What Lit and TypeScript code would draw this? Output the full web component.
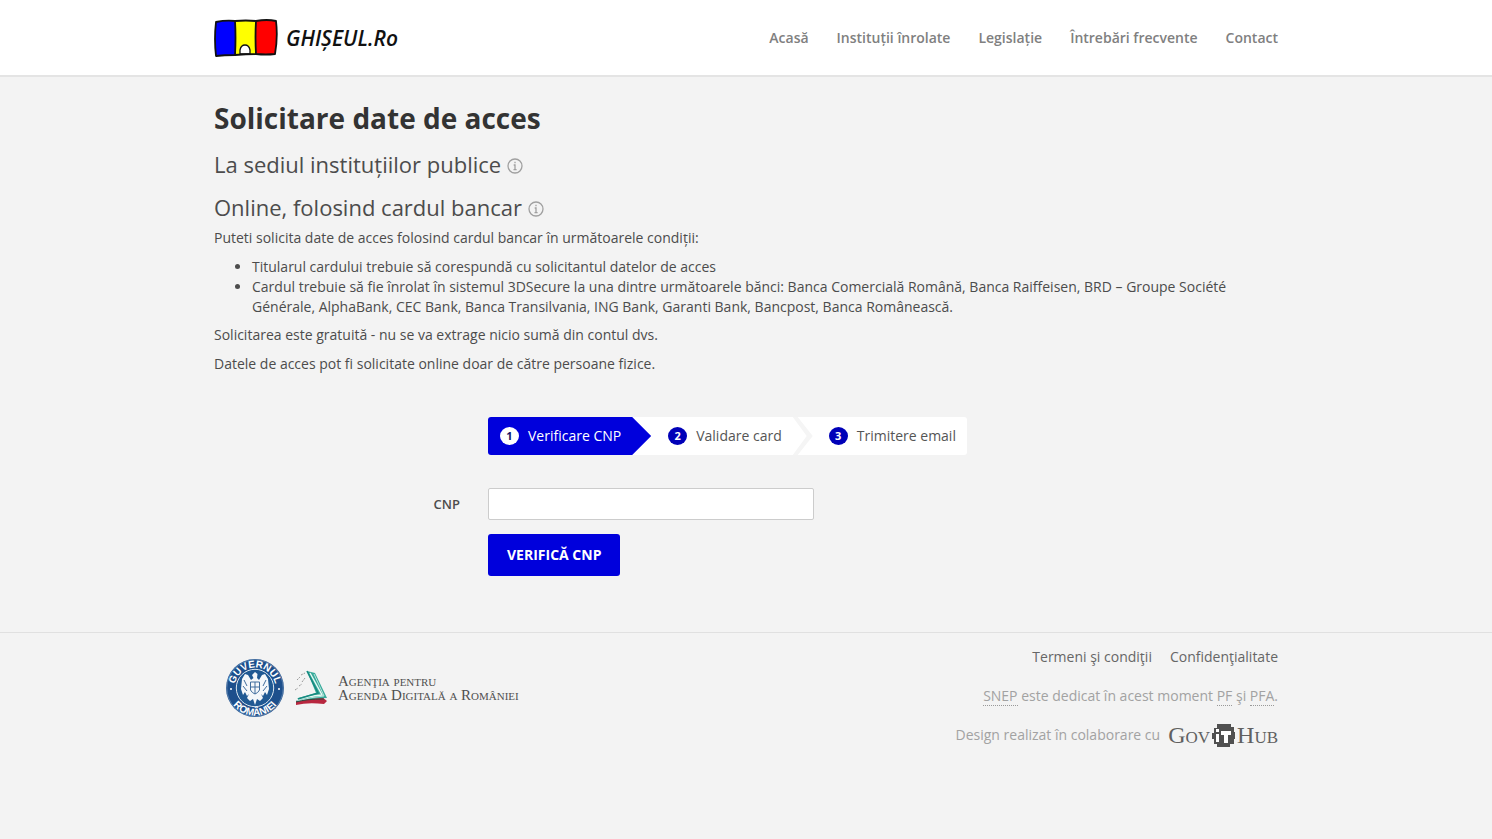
import { LitElement, html, css } from "lit";
import { customElement, property, state } from "lit/decorators.js";
import { classMap } from "lit/directives/class-map.js";

@customElement("site-logo")
class SiteLogo extends LitElement {
  static styles = css`
    :host { display: block; }
    .logo { display: flex; align-items: center; gap: 8px; color: #111; text-decoration: none; }
    .flag { display: block; width: 64px; height: 38px; }
    .name { font: italic 600 21px/38px "Open Sans", sans-serif; }
  `;
  render() {
    return html`
      <a class="logo" href="#">
        <svg class="flag" viewBox="0 0 64 38" aria-hidden="true">
          <path d="M2 3 Q12 1 21 2 L21 36 Q10 36 2 37 Q0 20 2 3Z" fill="#00f" />
          <path d="M21 2 Q32 1 42 2 L42 35 Q32 35 21 36Z" fill="#ff0" />
          <path d="M42 2 Q53 0 62 2 Q64 18 61 35 Q52 36 42 35Z" fill="#f00" />
          <path d="M26 35 V31 Q27 26 31 26 Q35 26 36 31 V35Z" fill="#fff" stroke="#111" stroke-width="1.3" />
          <path d="M2 3 Q12 1 21 2 Q32 1 42 2 Q53 0 62 2 Q64 18 61 35 Q52 36 42 35 Q32 35 21 36 Q10 36 2 37 Q0 20 2 3Z M21 2 Q22 18 21 36 M42 2 Q41 18 42 35"
            fill="none" stroke="#111" stroke-width="1.8" stroke-linejoin="round" />
        </svg>
        <span class="name">GHIȘEUL.Ro</span>
      </a>
    `;
  }
}

@customElement("step-list")
class StepList extends LitElement {
  @property({ attribute: false }) steps: string[] = [];
  @property({ type: Number }) current = 0;

  static styles = css`
    :host { display: block; }
    .steps { display: inline-flex; vertical-align: top; margin: 0; padding: 0; list-style: none; background: #fff; border-radius: 3px; overflow: hidden; }
    .step { position: relative; display: flex; align-items: center; gap: 9px; height: 38px; padding: 0 11px; color: #555; }
    .step + .step { padding-left: 36px; }
    .step:not(:last-child)::after {
      content: ""; position: absolute; z-index: 1; top: 0; left: 100%; width: 20px; height: 100%;
      background: #f5f5f5;
      clip-path: polygon(0 0, 5px 0, 100% 50%, 5px 100%, 0 100%, calc(100% - 6px) 50%);
    }
    .active { background: #0000dc; color: #fff; }
    .active:first-child { padding-left: 12px; }
    .step.active:not(:last-child)::after { left: calc(100% - 1px); background: #0000dc; clip-path: polygon(0 0, 1px 0, 100% 50%, 1px 100%, 0 100%); }
    .number {
      width: 19px; height: 18px; border-radius: 50%; background: #0000b8; color: #fff;
      font-size: 11px; font-weight: 700; line-height: 18px; text-align: center;
    }
    .active .number { background: #fff; color: #111166; }
  `;
  render() {
    return html`
      <ol class="steps">
        ${this.steps.map(
          (label, i) => html`
            <li class=${classMap({ step: true, active: i === this.current })}>
              <span class="number">${i + 1}</span><span>${label}</span>
            </li>
          `,
        )}
      </ol>
    `;
  }
}

@customElement("site-footer")
class SiteFooter extends LitElement {
  static styles = css`
    :host { display: block; border-top: 1px solid #e0e0e0; }
    .inner { display: flex; justify-content: space-between; gap: 24px; max-width: 1064px; margin: 0 auto; padding: 14px 0 24px; }
    .agency { display: flex; align-items: flex-start; gap: 10px; padding: 12px 0 0 12px; }
    .seal { display: block; width: 58px; height: 58px; overflow: visible; }
    .ring { font: 700 10px "Liberation Sans", sans-serif; fill: #fff; }
    .books { display: block; width: 34px; height: 36px; margin-top: 11px; }
    .title { margin: 15px 0 0; font: 15px/14px "Liberation Serif", serif; font-variant: small-caps; color: #505050; }
    .info { display: flex; flex-direction: column; align-items: flex-end; gap: 19px; line-height: 20px; color: #a2a2a2; }
    .links { display: flex; gap: 18px; }
    .links a { color: #666; text-decoration: none; }
    .info p { margin: 0; }
    abbr { text-decoration: none; border-bottom: 1px dotted #999; }
    .design { display: flex; align-items: center; gap: 8px; height: 20px; }
    .hub { display: flex; align-items: center; gap: 2px; color: #606060; font: 24px/20px "Liberation Serif", serif; font-variant: small-caps; text-decoration: none; }
    .hub svg { display: block; width: 23px; height: 23px; }
  `;
  render() {
    return html`
      <div class="inner">
        <div class="agency">
          <svg class="seal" viewBox="0 0 58 58" role="img" aria-label="Guvernul României">
            <defs>
              <path id="top" d="M8.500 29 A20.500 20.500 0 0 1 49.500 29" />
              <path id="bottom" d="M1.500 29 A27.500 27.500 0 0 0 56.500 29" />
            </defs>
            <circle cx="29" cy="29" r="29" fill="#1d4f8c" />
            <circle cx="29" cy="29" r="28.200" fill="none" stroke="#8fabc9" stroke-width=".5" />
            <circle cx="29" cy="29" r="18.700" fill="#205993" stroke="#dce7f0" stroke-width="1" />
            <text class="ring" text-anchor="middle"><textPath href="#top" startOffset="50%">GUVERNUL</textPath></text>
            <text class="ring" text-anchor="middle"><textPath href="#bottom" startOffset="50%">ROMÂNIEI</textPath></text>
            <circle cx="5" cy="30" r="1" fill="#fff" /><circle cx="53" cy="30" r="1" fill="#fff" />
            <path d="M29 13 L31.5 15 L31 19 L33 21 L36 16 L39 15 L42 20 L43 30 L41 36 L39 33 L37 37 L35 35 L37 39 L34 42 L31 40 L29 46 L27 40 L24 42 L21 39 L23 35 L21 37 L19 33 L17 36 L15 30 L16 20 L19 15 L22 16 L25 21 L27.5 19 L26 16 Z" fill="#f4f7fa" />
            <path d="M24.5 23 H33.5 V31 Q32 34 29 35 Q26 34 24.5 31Z M29 23 V35 M24.5 28 H33.5 M18 21 L21 27 M17 27 L21 32 M40 21 L37 27 M41 27 L37 32" fill="none" stroke="#406d9d" stroke-width="1" />
          </svg>
          <svg class="books" viewBox="0 0 34 36" aria-hidden="true">
            <path d="M2 31 Q8 28 28 27 L33 31 L30 34 Q14 32 2 35Z" fill="#b8273f" />
            <path d="M13 1 L21 3 L33 28 Q18 28 2 32 L4 28 L22 23Z" fill="#38aa9b" />
            <path d="M16 3 L28 25 Q14 26 3 30" fill="none" stroke="#e9f8f4" stroke-width="1.4" />
            <path d="M20 4 L30 26 Q16 27 4 31" fill="none" stroke="#b8e6dc" stroke-width="1" />
            <path d="M13 1 L24 23 L4 29" fill="none" stroke="#168a80" stroke-width="1.6" />
            <path d="M2 32 Q12 29 30 29" fill="none" stroke="#35463f" stroke-width="1" />
            <path d="M1 20 L4 18 M5 16 L8 14 M8 12 L11 8 M3 10 L6 7 M7 5 L11 3" stroke="#999" stroke-width="1" stroke-dasharray="2 1" />
          </svg>
          <p class="title">Agenţia pentru<br />Agenda Digitală a României</p>
        </div>
        <div class="info">
          <nav class="links" aria-label="Informații legale">
            <a href="#">Termeni şi condiţii</a>
            <a href="#">Confidenţialitate</a>
          </nav>
          <p><abbr>SNEP</abbr> este dedicat în acest moment <abbr>PF</abbr> şi <abbr>PFA</abbr>.</p>
          <p class="design">
            <span>Design realizat în colaborare cu</span>
            <a class="hub" href="#">
              <span>Gov</span>
              <svg viewBox="0 0 23 23" role="img" aria-label="IT">
                <path d="M5 0 H19 V3 H22 V8 H23 V15 H22 V20 H18 V23 H5 V20 H2 V15 H0 V9 H2 V4 H5Z" fill="#505050" />
                <path d="M4 5 H7 V8 H4Z M4 10 H7 V18 H4Z M9 7 H19 V11 H16 V19 H12 V11 H9Z" fill="#fff" />
              </svg>
              <span>Hub</span>
            </a>
          </p>
        </div>
      </div>
    `;
  }
}

@customElement("app-root")
class AppRoot extends LitElement {
  @state() private cnp = "";

  static styles = css`
    :host { display: block; min-height: 100vh; background: #f3f3f3; color: #4c4c4c; font: 14px/20px "Open Sans", sans-serif; }
    .header { background: #fff; border-bottom: 2px solid #e4e4e4; }
    .bar { display: flex; align-items: center; justify-content: space-between; gap: 24px; max-width: 1064px; padding: 19px 0 18px; margin: 0 auto; }
    .menu { display: flex; gap: 28px; }
    .menu a { color: #808080; font-weight: 600; text-decoration: none; }
    .content { max-width: 1064px; margin: 0 auto; padding: 22px 0 56px; }
    h1 { margin: 0; color: #333; font-size: 28px; line-height: 38px; }
    h2 { display: flex; align-items: center; gap: 6px; margin: 11px 0 0; font-size: 22px; font-weight: 400; line-height: 32px; }
    .tip { display: block; padding: 3px 0 0; border: 0; background: none; }
    .tip svg { display: block; width: 16px; height: 16px; }
    p { margin: 0 0 9px; }
    .intro { margin-top: 5px; }
    .terms { margin: 0 0 8px; padding-left: 38px; }
    .form { display: grid; grid-template-columns: 246px 1fr; column-gap: 28px; margin-top: 43px; align-items: center; justify-items: start; }
    .steps { grid-column: 2; margin-bottom: 33px; }
    label { justify-self: end; font-size: 13px; font-weight: 600; }
    .cnp { box-sizing: border-box; width: 100%; max-width: 326px; height: 32px; padding: 4px 8px; border: 1px solid #ccc; border-radius: 2px; background: #fff; font: inherit; }
    .submit { grid-column: 2; margin-top: 14px; padding: 11px 19px; border: 0; border-radius: 3px; background: #0000dc; color: #fff; font: 700 14px/20px "Open Sans", sans-serif; text-transform: uppercase; }
  `;

  private tip() {
    return html`
      <button class="tip" type="button" aria-label="Detalii">
        <svg viewBox="0 0 16 16" aria-hidden="true">
          <circle cx="8" cy="8" r="7" fill="none" stroke="#a0a0a0" stroke-width="1.3" />
          <path d="M8 3.8 V5.3 M6.7 7 H8 V11.5 M6.5 11.7 H9.6" fill="none" stroke="#a0a0a0" stroke-width="1.3" />
        </svg>
      </button>
    `;
  }

  render() {
    return html`
      <header class="header">
        <div class="bar">
          <site-logo></site-logo>
          <nav class="menu">
            ${["Acasă", "Instituții înrolate", "Legislație", "Întrebări frecvente", "Contact"].map(
              (item) => html`<a href="#">${item}</a>`,
            )}
          </nav>
        </div>
      </header>
      <main class="content">
        <h1>Solicitare date de acces</h1>
        <h2>La sediul instituțiilor publice ${this.tip()}</h2>
        <h2>Online, folosind cardul bancar ${this.tip()}</h2>
        <p class="intro">Puteti solicita date de acces folosind cardul bancar în următoarele condiții:</p>
        <ul class="terms">
          <li>Titularul cardului trebuie să corespundă cu solicitantul datelor de acces</li>
          <li>
            Cardul trebuie să fie înrolat în sistemul 3DSecure la una dintre următoarele bănci: Banca Comercială Română,
            Banca Raiffeisen, BRD – Groupe Société Générale, AlphaBank, CEC Bank, Banca Transilvania, ING Bank, Garanti
            Bank, Bancpost, Banca Românească.
          </li>
        </ul>
        <p>Solicitarea este gratuită - nu se va extrage nicio sumă din contul dvs.</p>
        <p>Datele de acces pot fi solicitate online doar de către persoane fizice.</p>
        <form class="form" @submit=${(e: Event) => e.preventDefault()}>
          <step-list class="steps" .steps=${["Verificare CNP", "Validare card", "Trimitere email"]}></step-list>
          <label for="cnp">CNP</label>
          <input
            class="cnp"
            id="cnp"
            type="text"
            .value=${this.cnp}
            @input=${(e: Event) => (this.cnp = (e.target as HTMLInputElement).value)}
          />
          <button class="submit" type="submit">Verifică CNP</button>
        </form>
      </main>
      <site-footer></site-footer>
    `;
  }
}
